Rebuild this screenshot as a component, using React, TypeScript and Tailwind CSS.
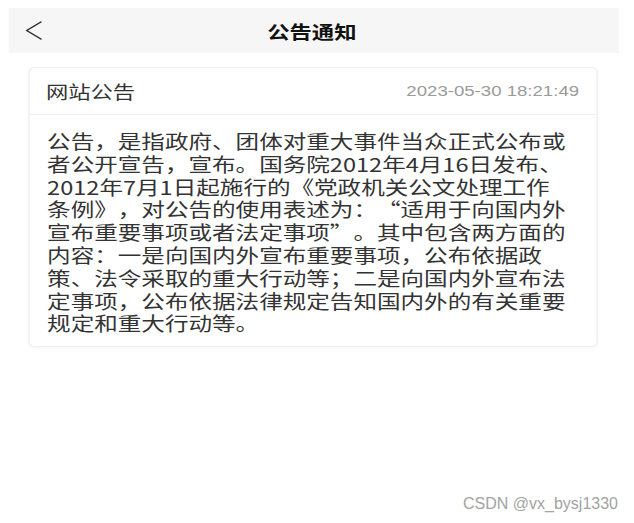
const lines = [
  '公告，是指政府、团体对重大事件当众正式公布或',
  '者公开宣告，宣布。国务院2012年4月16日发布、',
  '2012年7月1日起施行的《党政机关公文处理工作',
  '条例》，对公告的使用表述为：“适用于向国内外',
  '宣布重要事项或者法定事项”。其中包含两方面的',
  '内容：一是向国内外宣布重要事项，公布依据政',
  '策、法令采取的重大行动等；二是向国内外宣布法',
  '定事项，公布依据法律规定告知国内外的有关重要',
  '规定和重大行动等。',
]

const cjk = { fontFamily: '"Noto Sans CJK SC", "Noto Sans", sans-serif' }

export default function App() {
  return (
    <div className="relative w-[634px] h-[523px] overflow-hidden bg-white [text-spacing-trim:space-all]" style={cjk}>
      {/* the reference is a horizontally stretched phone screen */}
      <div className="w-[511px] origin-top-left scale-x-[1.24] pt-2">
        <header className="ml-[7px] mr-[12px] h-[45px] bg-[#f6f6f6] grid grid-cols-[1fr_auto_1fr] items-center">
          <div className="pl-[13px] flex items-center">
            <svg width="14" height="19" viewBox="0 0 14 19" fill="none">
              <polyline points="13,1 1.5,9.5 13,18" stroke="#333" strokeWidth="1.4" strokeLinecap="round" strokeLinejoin="round" />
            </svg>
          </div>
          <h1 className="text-[18px] font-bold text-[#111] leading-none -ml-[3px]">公告通知</h1>
          <div />
        </header>

        <div className="mt-[14px] ml-[23px] w-[459px] bg-white border border-[#efefef] rounded-[5px] shadow-[0_1px_3px_rgba(0,0,0,0.04)]">
          <div className="h-[47px] px-[14px] flex items-center justify-between border-b border-[#efefef]">
            <span className="text-[18px] text-[#333] -ml-[1px]">网站公告</span>
            <span
              className="text-[15px] text-[#9a9a9a]"
              style={{ fontFamily: '"Liberation Sans", Arial, sans-serif' }}
            >
              2023-05-30 18:21:49
            </span>
          </div>
          <div className="px-[14px] pt-[15px] pb-[11px] text-[19px] leading-[22.8px] text-[#333]">
            {lines.map((l, i) => (
              <div key={i} className="whitespace-nowrap">{l}</div>
            ))}
          </div>
        </div>
      </div>

      <span
        className="absolute right-[16px] bottom-[7px] text-[16px] text-[#a3a3a3]"
        style={{ fontFamily: '"Liberation Sans", Arial, sans-serif' }}
      >
        CSDN @vx_bysj1330
      </span>
    </div>
  )
}
